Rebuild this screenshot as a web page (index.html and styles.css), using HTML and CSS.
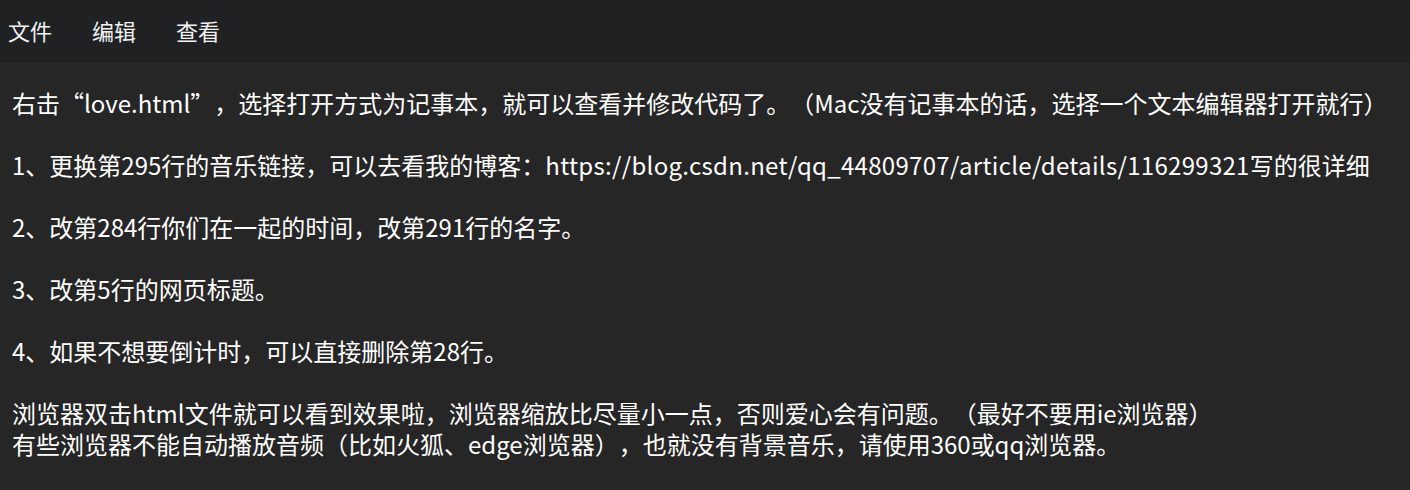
FILE: index.html
```html
<!DOCTYPE html>
<html lang="zh-CN">
<head>
<meta charset="utf-8">
<link rel="stylesheet" href="styles.css">
</head>
<body>
<div class="menubar">
  <span class="menu-item">文件</span>
  <span class="menu-item">编辑</span>
  <span class="menu-item">查看</span>
</div>
<div class="content">
  <p>右击“love.html”，选择打开方式为记事本，就可以查看并修改代码了。（Mac没有记事本的话，选择一个文本编辑器打开就行）</p>
  <p>1、更换第295行的音乐链接，可以去看我的博客：<span class="url">https://blog.csdn.net/qq_44809707/article/details/116299321</span>写的很详细</p>
  <p>2、改第284行你们在一起的时间，改第291行的名字。</p>
  <p>3、改第5行的网页标题。</p>
  <p>4、如果不想要倒计时，可以直接删除第28行。</p>
  <p>浏览器双击html文件就可以看到效果啦，浏览器缩放比尽量小一点，否则爱心会有问题。（最好不要用ie浏览器）<br>有些浏览器不能自动播放音频（比如火狐、edge浏览器），也就没有背景音乐，请使用360或qq浏览器。</p>
</div>
</body>
</html>
```
FILE: styles.css
```css
html, body {
  margin: 0;
  padding: 0;
  background: #262626;
  height: 100%;
  overflow: hidden;
}
body {
  font-family: "Noto Sans CJK SC", "Noto Sans", sans-serif;
  color: #ffffff;
  text-spacing-trim: space-all;
}
.menubar {
  height: 62px;
  background: #1f2123;
  display: flex;
  align-items: center;
  padding-left: 8px;
  gap: 40px;
  border-bottom: 2px solid #1c1e1f;
  box-sizing: border-box;
}
.menu-item {
  font-size: 22px;
  line-height: 26px;
  color: #f2f2f2;
}
.content {
  padding: 25px 12px 0 12px;
}
.content p {
  margin: 0 0 31px 0;
  font-size: 24px;
  line-height: 31px;
  white-space: nowrap;
}
.url {
  letter-spacing: 0.3px;
}
```
